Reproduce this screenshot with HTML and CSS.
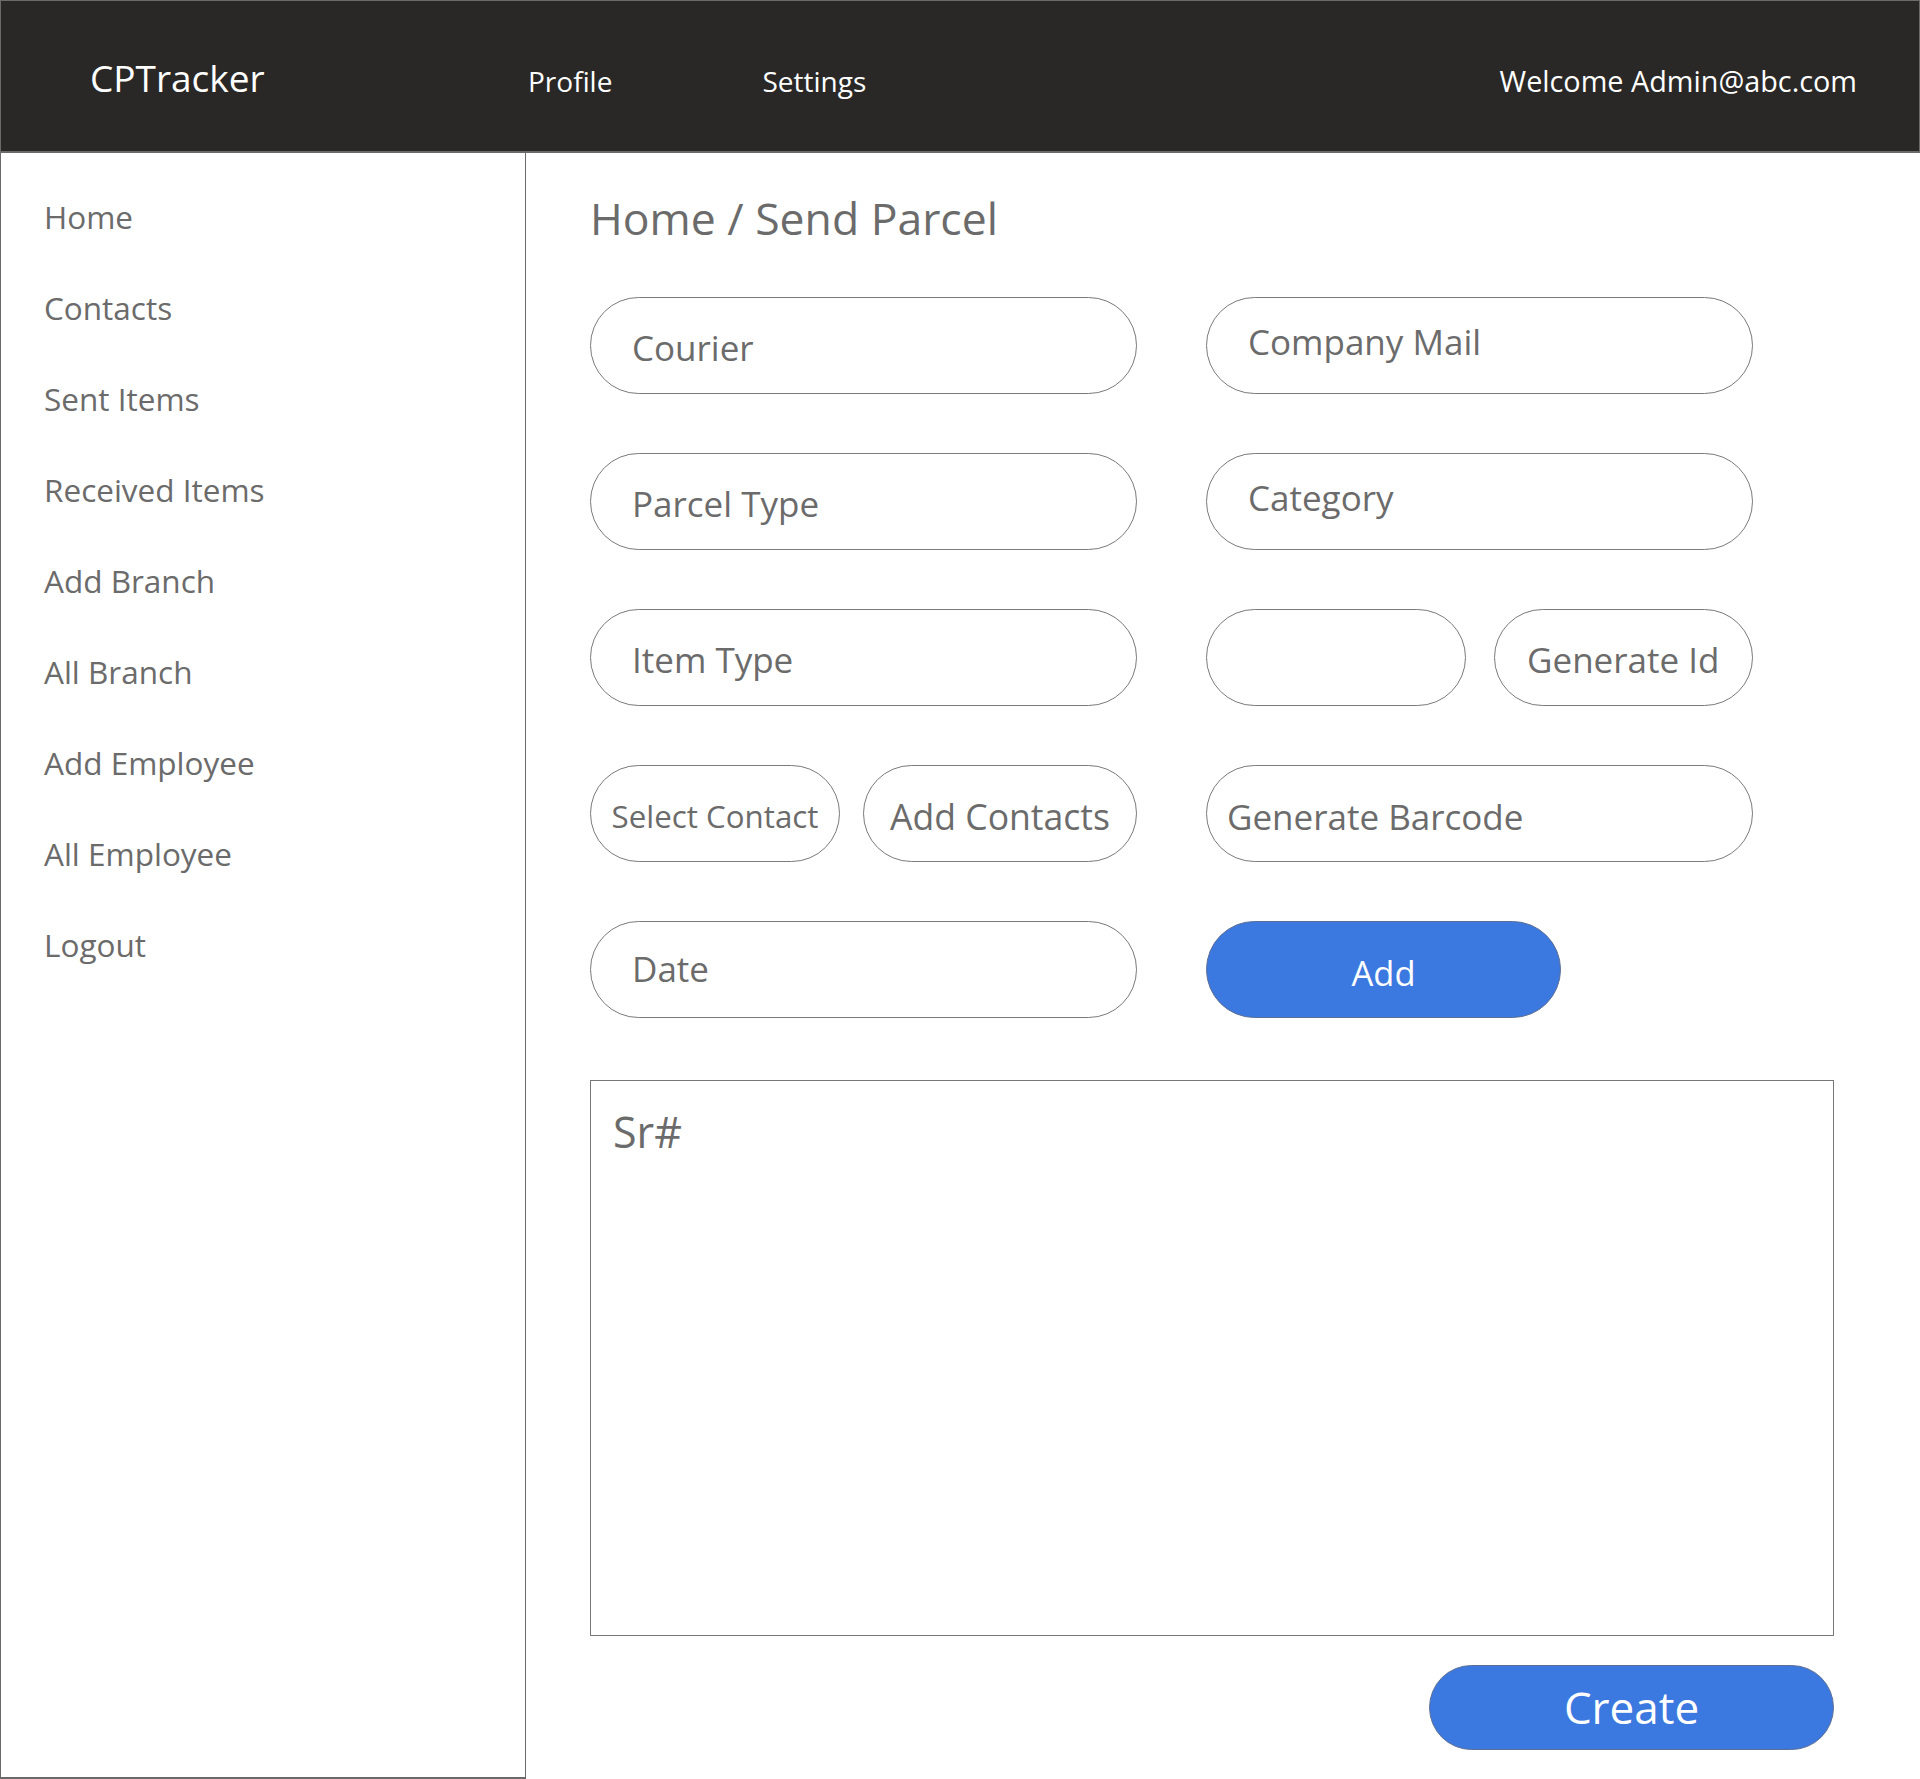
FILE: index.html
```html
<!DOCTYPE html>
<html lang="en">
<head>
<meta charset="utf-8">
<title>CPTracker - Send Parcel</title>
<link rel="stylesheet" href="styles.css">
</head>
<body>
<div class="app">
  <header class="topbar">
    <div class="brand">CPTracker</div>
    <nav class="topnav">
      <a class="topnav-link">Profile</a>
      <a class="topnav-link">Settings</a>
    </nav>
    <div class="welcome">Welcome Admin@abc.com</div>
  </header>
  <div class="layout">
    <aside class="sidebar">
      <ul class="menu">
        <li class="menu-item">Home</li>
        <li class="menu-item">Contacts</li>
        <li class="menu-item">Sent Items</li>
        <li class="menu-item">Received Items</li>
        <li class="menu-item">Add Branch</li>
        <li class="menu-item">All Branch</li>
        <li class="menu-item">Add Employee</li>
        <li class="menu-item">All Employee</li>
        <li class="menu-item">Logout</li>
      </ul>
    </aside>
    <main class="content">
      <h1 class="crumb">Home / Send Parcel</h1>
      <div class="form">
        <div class="pill field">Courier</div>
        <div class="pill field field-up">Company Mail</div>
        <div class="pill field">Parcel Type</div>
        <div class="pill field field-up">Category</div>
        <div class="pill field">Item Type</div>
        <div class="pair pair-id">
          <div class="pill grow"></div>
          <div class="pill grow center">Generate Id</div>
        </div>
        <div class="pair pair-contact">
          <div class="pill center small contact-select">Select Contact</div>
          <div class="pill center contact-add">Add Contacts</div>
        </div>
        <div class="pill field barcode">Generate Barcode</div>
        <div class="pill field field-date">Date</div>
        <div class="cell-add"><button class="btn btn-add">Add</button></div>
      </div>
      <div class="table">
        <div class="th">Sr#</div>
      </div>
      <div class="actions"><button class="btn btn-create">Create</button></div>
    </main>
  </div>
</div>
</body>
</html>
```
FILE: styles.css
```css
* { box-sizing: border-box; }

html, body {
  margin: 0;
  padding: 0;
  background: #ffffff;
}

body {
  font-family: "Open Sans", "Noto Sans", "Liberation Sans", sans-serif;
  color: #6b6b6b;
}

.app {
  width: 1920px;
  height: 1779px;
  display: flex;
  flex-direction: column;
}

/* ---------- top bar ---------- */
.topbar {
  height: 153px;
  flex: 0 0 153px;
  background: #292826;
  border: 1px solid #6a6a6a;
  border-bottom-width: 2px;
  display: flex;
  align-items: center;
  padding: 0 62px 0 89px;
  color: #ffffff;
}

.brand {
  flex: 0 0 438px;
  font-size: 37px;
  line-height: 1;
  margin-top: 2px;
}

.topnav {
  display: flex;
  gap: 150px;
  margin-top: 10px;
}

.topnav-link {
  font-size: 28px;
  line-height: 1;
  color: #ffffff;
}

.welcome {
  margin-left: auto;
  margin-top: 10px;
  font-size: 28.8px;
  line-height: 1;
}

/* ---------- layout ---------- */
.layout {
  flex: 1;
  display: flex;
}

.sidebar {
  flex: 0 0 526px;
  border-left: 1px solid #6a6a6a;
  border-right: 1px solid #6a6a6a;
  border-bottom: 2px solid #6a6a6a;
}

.menu {
  list-style: none;
  margin: 0;
  padding: 18px 0 0 43px;
}

.menu-item {
  height: 91px;
  line-height: 91px;
  font-size: 31.5px;
  color: #6b6b6b;
}

/* ---------- content ---------- */
.content {
  flex: 1;
  padding: 35px 86px 0 64px;
}

.crumb {
  margin: 0 0 49px;
  font-size: 44.5px;
  line-height: 60px;
  font-weight: 400;
  color: #6b6b6b;
}

.form {
  display: grid;
  grid-template-columns: 547px 547px;
  grid-auto-rows: 97px;
  column-gap: 69px;
  row-gap: 59px;
}

.pill {
  height: 97px;
  border: 1px solid #7a7a7a;
  border-radius: 49px;
  display: flex;
  align-items: center;
  font-size: 35px;
  color: #6b6b6b;
  background: #ffffff;
  white-space: nowrap;
}

.field {
  padding-left: 41px;
  padding-top: 4px;
}

.field-up {
  padding-top: 0;
  padding-bottom: 8px;
}

.field-date {
  padding-top: 0;
  padding-bottom: 2px;
}

.barcode {
  padding-left: 20px;
  padding-top: 5px;
}

.center {
  justify-content: center;
  padding-top: 4px;
}

.small {
  font-size: 31.3px;
  padding-top: 5px;
}

.pair {
  display: flex;
}

.pair-id {
  gap: 28px;
}

.grow {
  flex: 1;
}

.pair-contact {
  gap: 23px;
}

.contact-select {
  flex: 0 0 250px;
}

.contact-add {
  flex: 0 0 274px;
  font-size: 35.6px;
  padding-top: 5px;
}

.cell-add {
  display: flex;
}

.btn {
  font-family: "Open Sans", "Noto Sans", "Liberation Sans", sans-serif;
  background: #3b78df;
  color: #ffffff;
  border: 1px solid #5d6f95;
  padding: 0;
  cursor: pointer;
}

.btn-add {
  width: 355px;
  height: 97px;
  border-radius: 49px;
  font-size: 34.5px;
  padding-top: 6px;
}

.table {
  margin-top: 62px;
  height: 556px;
  border: 1px solid #777777;
  padding: 21px 0 0 22px;
}

.th {
  font-size: 43px;
  line-height: 60px;
  color: #6b6b6b;
}

.actions {
  display: flex;
  justify-content: flex-end;
  margin-top: 29px;
}

.btn-create {
  width: 405px;
  height: 85px;
  border-radius: 43px;
  font-size: 44px;
  padding-bottom: 2px;
}
```
